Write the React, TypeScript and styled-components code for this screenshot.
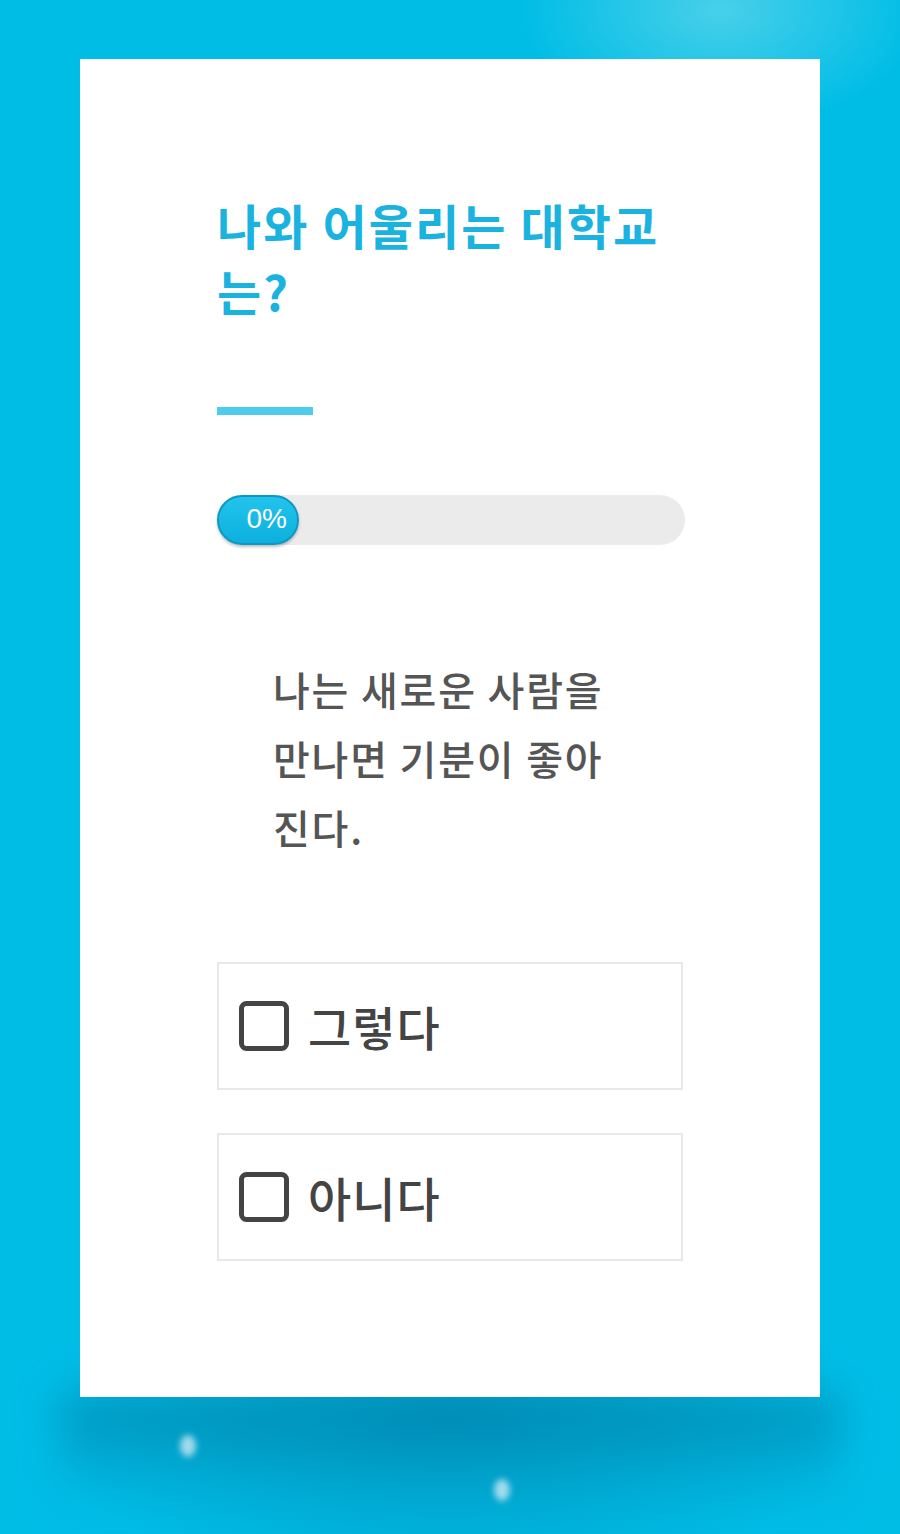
import React, { useState } from 'react';
import styled, { createGlobalStyle } from 'styled-components';

const GlobalStyle = createGlobalStyle`
  html, body {
    margin: 0;
    padding: 0;
  }
  body {
    background: #00bde6;
    font-family: 'Noto Sans CJK KR', 'Noto Sans', sans-serif;
  }
`;

const options = ['그렇다', '아니다'];

export default function App() {
  const [picked, setPicked] = useState<number | null>(null);
  const progress = 0;

  return (
    <>
      <GlobalStyle />
      <Page>
        <Glow />
        <Card>
          <Title>나와 어울리는 대학교는?</Title>
          <Underline />
          <Track>
            <Fill style={{ width: `calc(${progress}% + 82px)` }}>
              <Percent>{progress}%</Percent>
            </Fill>
          </Track>
          <Question>나는 새로운 사람을 만나면 기분이 좋아진다.</Question>
          <Options>
            {options.map((text, i) => (
              <Option key={text} onClick={() => setPicked(i)}>
                <CheckBox checked={picked === i} />
                <OptionText>{text}</OptionText>
              </Option>
            ))}
          </Options>
        </Card>
        <Dot $x={188} $y={1446} />
        <Dot $x={502} $y={1490} />
      </Page>
    </>
  );
}

const CheckBox = ({ checked }: { checked: boolean }) => (
  <svg width='52' height='52' viewBox='0 0 52 52'>
    <rect x='3.5' y='3.5' width='45' height='45' rx='5' fill='none' stroke='#444' strokeWidth='5' />
    {checked && <path d='M13 26l9 9 17-18' fill='none' stroke='#444' strokeWidth='5' />}
  </svg>
);

const Page = styled.div`
  position: relative;
  min-height: 1534px;
  padding-top: 59px;
  box-sizing: border-box;
  overflow: hidden;
  background:
    radial-gradient(ellipse 200px 120px at 720px 10px, rgba(120, 220, 235, 0.6), rgba(0, 189, 230, 0) 100%),
    radial-gradient(ellipse 420px 170px at 450px 1420px, rgba(0, 120, 160, 0.5), rgba(0, 189, 230, 0) 100%),
    #00bde6;
`;

const Glow = styled.div`
  position: absolute;
  left: 60px;
  right: 60px;
  top: 1397px;
  height: 110px;
  background: linear-gradient(180deg, rgba(0, 120, 160, 0.55), rgba(0, 150, 195, 0.25) 70%, rgba(0, 189, 230, 0));
  filter: blur(20px);
`;

const Card = styled.div`
  position: relative;
  margin: 0 80px;
  height: 1338px;
  box-sizing: border-box;
  background: #ffffff;
  padding: 132px 0 0 137px;
  display: flex;
  flex-direction: column;
  align-items: flex-start;
`;

const Title = styled.h1`
  margin: 0;
  width: 468px;
  color: #1ab3df;
  font-size: 48px;
  font-weight: 700;
  line-height: 66px;
  letter-spacing: 2.1px;
`;

const Underline = styled.div`
  margin-top: 84px;
  width: 96px;
  height: 8px;
  background: #4ccde9;
`;

const Track = styled.div`
  margin-top: 80px;
  width: 468px;
  height: 50px;
  border-radius: 25px;
  background: #ebebeb;
  display: flex;
`;

const Fill = styled.div`
  box-sizing: border-box;
  height: 50px;
  border-radius: 25px;
  border: 2px solid #0e97c2;
  background: linear-gradient(180deg, #22c4ec, #0db0dd);
  box-shadow: 0 2px 3px rgba(0, 0, 0, 0.25);
  display: flex;
  align-items: center;
  justify-content: flex-end;
  padding-right: 10px;
`;

const Percent = styled.span`
  color: #ffffff;
  font-family: 'Liberation Sans', Arial, sans-serif;
  font-size: 28px;
  line-height: 1;
  margin-top: -3px;
`;

const Question = styled.p`
  margin: 110px 0 0 56px;
  width: 340px;
  color: #555555;
  font-size: 40px;
  font-weight: 500;
  line-height: 69px;
  letter-spacing: 1.8px;
`;

const Options = styled.div`
  margin-top: 100px;
  display: flex;
  flex-direction: column;
  gap: 43px;
`;

const Option = styled.div`
  box-sizing: border-box;
  width: 466px;
  height: 128px;
  border: 2px solid #e8e8e8;
  display: flex;
  align-items: center;
  gap: 18px;
  padding-left: 19px;
  cursor: pointer;
`;

const OptionText = styled.span`
  color: #444444;
  font-size: 47px;
  font-weight: 500;
  line-height: 1;
  letter-spacing: 1px;
  margin-top: -2px;
`;

const Dot = styled.div<{ $x: number; $y: number }>`
  position: absolute;
  left: ${(p) => p.$x - 8}px;
  top: ${(p) => p.$y - 11}px;
  width: 16px;
  height: 22px;
  border-radius: 50%;
  background: rgba(215, 238, 245, 0.75);
  filter: blur(3px);
`;
